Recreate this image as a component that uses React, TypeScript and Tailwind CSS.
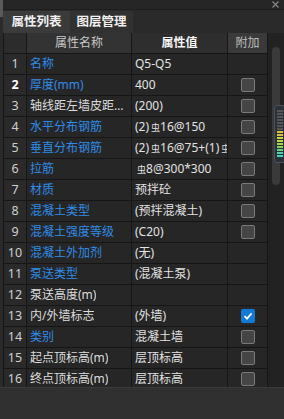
import React from "react";

interface PropRow {
  no: number;
  name: string;
  value: React.ReactNode;
  blue?: boolean;
  check?: "off" | "on";
  boldNo?: boolean;
}

const Rebar = () => (
  <span className="inline-block align-top text-[9px] leading-[13px] ml-[2px]">虫</span>
);

const rows: PropRow[] = [
  { no: 1, name: "名称", value: "Q5-Q5", blue: true },
  { no: 2, name: "厚度(mm)", value: "400", blue: true, check: "off", boldNo: true },
  { no: 3, name: "轴线距左墙皮距离(mm)", value: "(200)", check: "off" },
  { no: 4, name: "水平分布钢筋", value: <>(2)<Rebar />16@150</>, blue: true, check: "off" },
  { no: 5, name: "垂直分布钢筋", value: <>(2)<Rebar />16@75+(1)<Rebar />16@150</>, blue: true, check: "off" },
  { no: 6, name: "拉筋", value: <><Rebar />8@300*300</>, blue: true, check: "off" },
  { no: 7, name: "材质", value: "预拌砼", blue: true, check: "off" },
  { no: 8, name: "混凝土类型", value: "(预拌混凝土)", blue: true, check: "off" },
  { no: 9, name: "混凝土强度等级", value: "(C20)", blue: true, check: "off" },
  { no: 10, name: "混凝土外加剂", value: "(无)", blue: true },
  { no: 11, name: "泵送类型", value: "(混凝土泵)", blue: true },
  { no: 12, name: "泵送高度(m)", value: "" },
  { no: 13, name: "内/外墙标志", value: "(外墙)", check: "on" },
  { no: 14, name: "类别", value: "混凝土墙", blue: true, check: "off" },
  { no: 15, name: "起点顶标高(m)", value: "层顶标高", check: "off" },
  { no: 16, name: "终点顶标高(m)", value: "层顶标高", check: "off" },
];

const Checkbox = ({ on }: { on: boolean }) =>
  on ? (
    <span className="w-[14px] h-[14px] rounded-[2px] bg-[#0f7bd6] flex items-center justify-center">
      <svg width="10" height="10" viewBox="0 0 10 10">
        <path d="M1.5 5.2 L4 7.6 L8.6 2.4" stroke="#fff" strokeWidth="1.8" fill="none" />
      </svg>
    </span>
  ) : (
    <span className="w-[14px] h-[14px] rounded-[2px] bg-[#454545] border border-[#7a7a7a]" />
  );

export default function App() {
  return (
    <div
      className="w-[284px] h-[419px] bg-[#2a2a2a] overflow-hidden relative text-[12px]"
      style={{ fontFamily: '"Noto Sans", "Noto Sans CJK SC", sans-serif' }}
    >
      {/* title strip */}
      <div className="h-[10px] bg-[#262626] border-b border-[#1e1e1e] relative">
        <div className="absolute left-0 top-0 w-[3px] h-[17px] bg-[#5a5a5a]" />
        <svg className="absolute right-[5px] top-[1px]" width="7" height="7" viewBox="0 0 7 7">
          <path d="M0.5 0.5 L6.5 6.5 M6.5 0.5 L0.5 6.5" stroke="#8a8a8a" strokeWidth="1.1" />
        </svg>
      </div>

      {/* tabs */}
      <div className="h-[23px] flex pl-[3px] pt-px">
        <div className="w-[67px] h-[22px] bg-[#3b3b3b] text-[#f0f0f0] font-bold text-[12.5px] flex items-center justify-center">
          属性列表
        </div>
        <div className="w-[63px] h-[22px] bg-[#313131] text-[#f0f0f0] font-bold text-[12.5px] flex items-center justify-center">
          图层管理
        </div>
      </div>

      <div className="flex h-[354px]">
        {/* table */}
        <div className="ml-[3px] w-[265px] h-[354px] overflow-hidden bg-[#161616] px-px">
          <div className="grid grid-cols-[22px_104px_95px_39px] auto-rows-[20px] gap-px">
            <div className="bg-[#2c2c2c]" />
            <div className="bg-[#333333] text-[#c8c8c8] flex items-center justify-center">属性名称</div>
            <div className="bg-[#2e2e2e] text-[#f4f4f4] font-bold flex items-center justify-center">属性值</div>
            <div className="bg-[#3a3a3a] text-[#bdbdbd] flex items-center justify-center">附加</div>
            {rows.map((r) => (
              <React.Fragment key={r.no}>
                <div
                  className={`bg-[#2a2a2a] flex items-center justify-center text-[12.5px] ${
                    r.boldNo ? "text-white font-bold" : "text-[#cfcfcf]"
                  }`}
                >
                  {r.no}
                </div>
                <div
                  className={`bg-[#262626] pl-[3px] pr-[2px] flex items-center min-w-0 ${
                    r.blue ? "text-[#2f8ce8]" : "text-[#dcdcdc]"
                  }`}
                >
                  <span className="truncate">{r.name}</span>
                </div>
                <div className="bg-[#262626] pl-[3px] flex items-center overflow-hidden whitespace-nowrap text-[#e2e2e2]">
                  {r.value}
                </div>
                <div className="bg-[#262626] flex items-center justify-center">
                  {r.check && <Checkbox on={r.check === "on"} />}
                </div>
              </React.Fragment>
            ))}
          </div>
        </div>

        {/* scrollbar */}
        <div className="w-[16px] bg-[#222222] relative">
          <div className="absolute left-[4px] top-[14px] w-[8px] h-[138px] rounded-full bg-[#3a3a3a]" />
        </div>
      </div>

      {/* bottom panel */}
      <div className="h-[32px] bg-[#303030] border-t border-[#3a3a3a]" />

      {/* floating level meter overlay */}
      <div className="absolute left-[274px] top-[105px] w-[12px] h-[58px] rounded-[3px] bg-[#2c3138] border border-[#4a5260] flex flex-col items-center gap-[1px] pt-[4px]">
        {["#555","#555","#555","#555","#555","#555","#555","#d8c238","#d8c238","#cfd23a","#b9d640","#9fd64a","#7fd65a","#5fd48a","#4fd0a8","#4ccfb8"].map((c, i) => (
          <span key={i} className="w-[6px] h-[2px]" style={{ backgroundColor: c }} />
        ))}
      </div>
    </div>
  );
}
